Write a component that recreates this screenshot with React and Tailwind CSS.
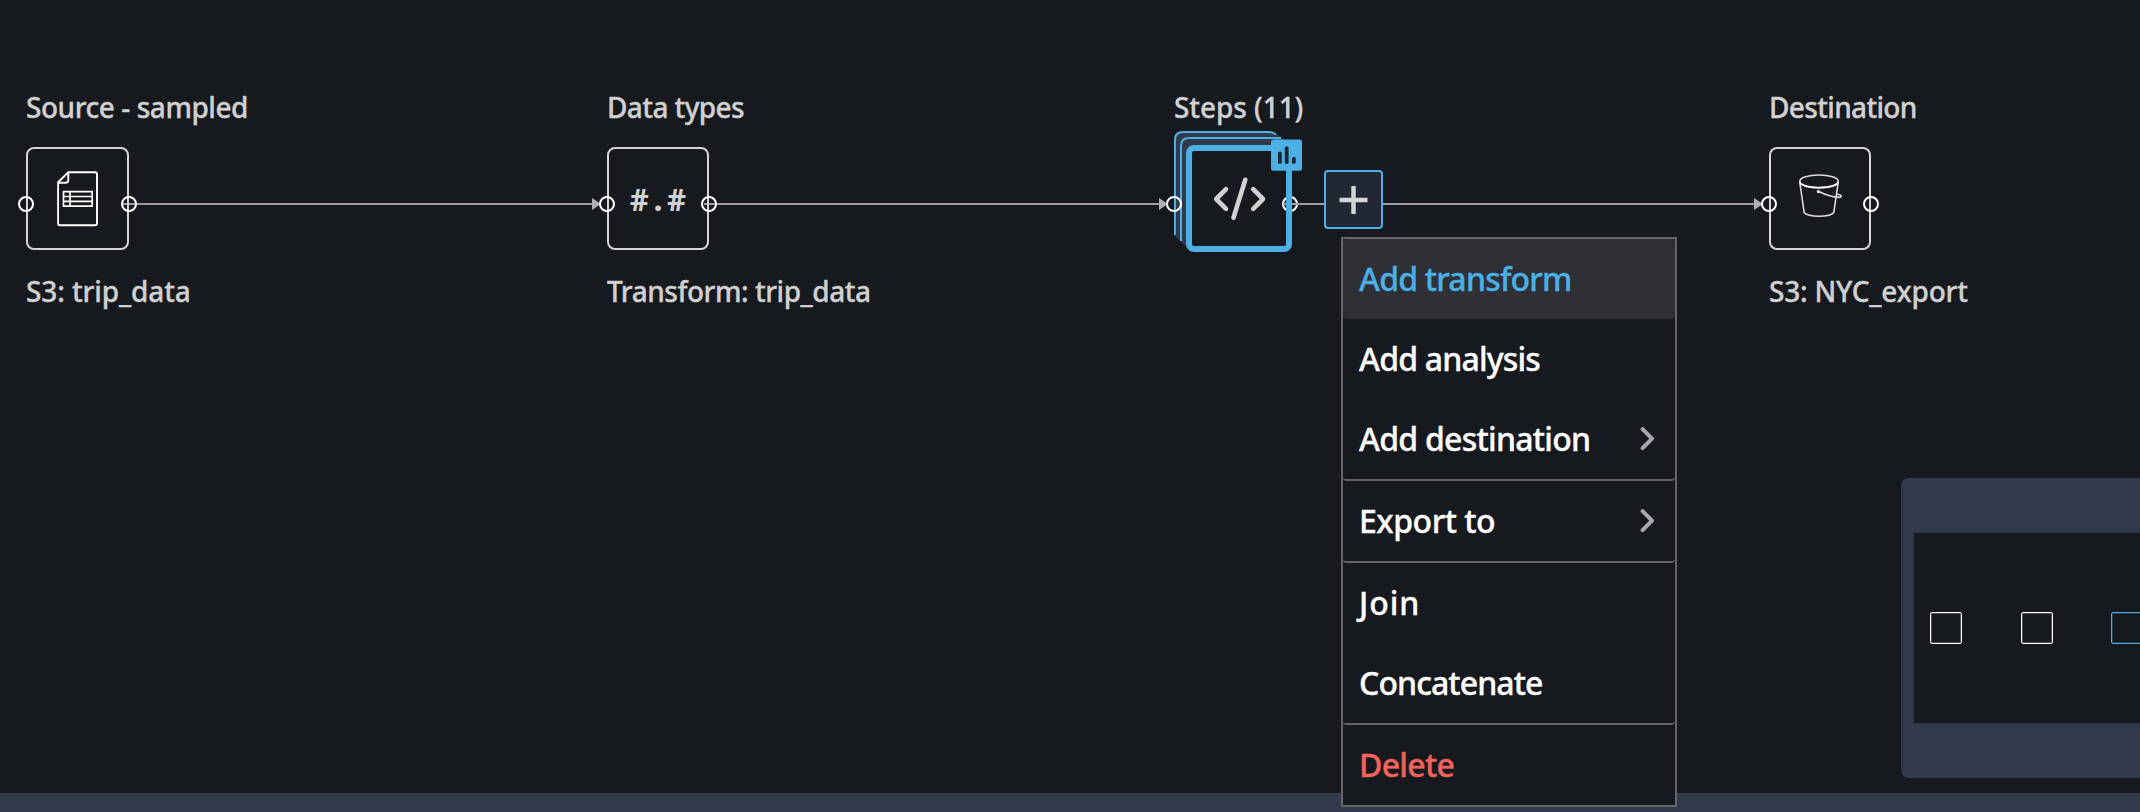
function Port({ className }) {
  return <span className={`absolute size-4 rounded-full border-2 border-white ${className}`} />;
}

function Node({ title, titleClass, label, labelClass, className, boxClass, children }) {
  return (
    <div className={`absolute top-[89px] flex flex-col whitespace-nowrap text-[28px] leading-9 font-medium text-[#d1d1d2] ${className}`}>
      <div className={titleClass}>{title}</div>
      <div className={`relative mt-[22px] flex h-[103px] items-center justify-center rounded-lg border-2 border-[#d5d5d6] ${boxClass}`}>
        {children}
        <Port className="top-[47px] -left-[10px]" />
        <Port className="top-[47px] -right-[10px]" />
      </div>
      <div className={`mt-[23px] ${labelClass}`}>{label}</div>
    </div>
  );
}

function Edges() {
  return (
    <svg className="absolute inset-0" width="2140" height="260" viewBox="0 0 2140 260" fill="none">
      <path d="M123 204H594M704 204H1160M1283 204H1756" stroke="#a19ca3" strokeWidth="2" />
      <path d="M592 198L601 204L592 210ZM1159 198L1168 204L1159 210ZM1754 198L1763 204L1754 210Z" fill="#b0adb3" />
    </svg>
  );
}

function SheetIcon() {
  return (
    <svg className="absolute left-[29px] top-[22px]" width="42" height="56" viewBox="57 171 42 56" fill="none" stroke="#fff" strokeWidth="1.9" strokeLinejoin="round">
      <path d="M68.3 172.2H95Q97 172.2 97 174.2V223.5Q97 225.2 95.3 225.2H59.8Q58.1 225.2 58.1 223.5V182.2Z" />
      <path d="M68.3 172.5V180Q68.3 182.7 65.6 182.7H58.4" />
      <path d="M63.5 191.7H92.2V206.2H63.5ZM63.5 196.5H92.2M63.5 201.4H92.2M70 191.7V206.2" strokeWidth="1.7" />
    </svg>
  );
}

function BucketIcon() {
  return (
    <svg className="absolute left-[27px] top-[24px]" width="46" height="46" viewBox="1798 173 46 46" fill="none" stroke="#dcdcdd" strokeWidth="1.6" strokeLinecap="round">
      <ellipse cx="1819" cy="181.3" rx="19.2" ry="6.3" />
      <path d="M1799.8 182C1801 190 1838 189.5 1838.2 182" stroke="#fff" />
      <path d="M1799.8 182.5L1804.2 212.5C1808 217.5 1830 217.5 1833.8 212.5L1838.2 182.5" />
      <circle cx="1818.5" cy="191.6" r="1.7" fill="#fff" stroke="none" />
      <path d="M1818.5 191.6C1826 195 1834 197.3 1838.5 197.4C1842.5 197.3 1842 194.8 1837 194.2" />
    </svg>
  );
}

function StepsNode() {
  return (
    <div className="absolute left-[1174px] top-[89px] flex w-[130px] flex-col whitespace-nowrap text-[28px] leading-9 font-medium text-[#d1d1d2]">
      <div className="tracking-[-0.07px]">Steps (11)</div>
      <svg className="absolute left-0 top-[42px]" width="120" height="120" viewBox="1174 131 120 120" fill="none">
        <path d="M1174 139Q1174 131 1182 131H1269Q1274 131 1282 138L1290 146V160H1200V250L1187 248L1180 241L1174 235Z" fill="#303a4a" />
        <path d="M1175 235V140Q1175 132 1183 132H1269Q1272 132 1276 134.5" stroke="#4cb0e4" strokeWidth="2" />
        <path d="M1181 241V146Q1181 138 1189 138H1281" stroke="#4cb0e4" strokeWidth="2" />
      </svg>
      <div className="relative mt-5 ml-3 h-[107px] w-[106px]">
        <div className="absolute inset-0 rounded-lg bg-[#16191e]" />
        <svg className="absolute left-[90px] top-[51px]" width="28" height="16" viewBox="0 0 28 16" fill="none">
          <circle cx="14" cy="8" r="7" stroke="#fff" strokeWidth="2" />
          <path d="M7 8H28" stroke="#a19ca3" strokeWidth="2" />
        </svg>
        <div className="absolute inset-0 rounded-lg border-6 border-[#4cb0e4]" />
        <Port className="top-[51px] -left-[20px]" />
        <svg className="absolute left-[26px] top-[30px]" width="56" height="48" viewBox="1212 175 56 48" fill="none" stroke="#d1d1d2" strokeWidth="4.6" strokeLinecap="round" strokeLinejoin="round">
          <path d="M1226 189.2L1216.2 199L1226 208.8M1253.2 189.2L1263 199L1253.2 208.8M1245.3 179.8L1233.5 217.8" />
        </svg>
        <svg className="absolute left-[85px] top-[-6px]" width="31" height="32" viewBox="0 0 31 32">
          <rect y="0.5" width="31" height="31.3" rx="2.5" fill="#4cb0e4" />
          <g fill="#1c2735">
            <rect x="7" y="12.5" width="3.8" height="12.5" rx="1.8" />
            <rect x="13.8" y="7.3" width="3.8" height="17.7" rx="1.8" />
            <rect x="21" y="18" width="3.8" height="7" rx="1.8" />
          </g>
        </svg>
      </div>
    </div>
  );
}

function AddButton() {
  return (
    <button className="absolute left-[1324px] top-[170px] flex size-[59px] items-center justify-center rounded-[4px] border-2 border-[#4cb0e4] bg-[#212733]">
      <svg width="29" height="29" viewBox="0 0 29 29" stroke="#d5d5d8" strokeWidth="4.5">
        <path d="M14.5 1V29M0.5 15H28.5" />
      </svg>
    </button>
  );
}

const MENU = [
  { text: "Add transform", className: "h-20 bg-[#2f3035] text-[#4cb0e4] tracking-[-0.79px]" },
  { text: "Add analysis", className: "h-20 text-white tracking-[-0.82px]" },
  { text: "Add destination", className: "h-[82px] border-b-2 text-white tracking-[-0.74px]", arrow: true },
  { text: "Export to", className: "h-[82px] border-b-2 text-white tracking-[-0.48px]", arrow: true },
  { text: "Join", className: "h-20 text-white tracking-[0.9px]" },
  { text: "Concatenate", className: "h-[82px] border-b-2 text-white tracking-[-0.92px]" },
  { text: "Delete", className: "h-20 text-[#f1635c] tracking-[-0.7px]" },
];

function Menu() {
  return (
    <div className="absolute left-[1341px] top-[237px] z-10 flex h-[570px] w-[336px] flex-col border-2 border-[#666565] bg-[#16191e] text-[32px] leading-10 font-medium">
      {MENU.map((item) => (
        <div key={item.text} className={`flex shrink-0 items-center justify-between rounded-[4px] border-[#666565] pr-5 pl-4 ${item.className}`}>
          <span>{item.text}</span>
          {item.arrow && (
            <svg width="15" height="24" viewBox="0 0 15 24" fill="none" stroke="#a9a9aa" strokeWidth="4" strokeLinecap="round" strokeLinejoin="round">
              <path d="M2.6 2.2L12 11.7L2.6 21.2" />
            </svg>
          )}
        </div>
      ))}
    </div>
  );
}

function MiniMap() {
  return (
    <div className="absolute left-[1901px] top-[478px] h-[300px] w-[260px] rounded-lg bg-[#303a4a] pt-[54px] pl-3">
      <div className="flex h-[192px] items-center gap-[58.5px] border border-[#29313e] bg-[#16191e] pl-4">
        <span className="size-8 shrink-0 rounded-[2px] border border-white shadow-[inset_0_0_0_1px_#ffffff40]" />
        <span className="size-8 shrink-0 rounded-[2px] border border-white shadow-[inset_0_0_0_1px_#ffffff40]" />
        <span className="size-8 shrink-0 rounded-[2px] border border-[#4cb0e4] shadow-[inset_0_0_0_1px_#4cb0e440]" />
      </div>
    </div>
  );
}

export default function App() {
  return (
    <div className="relative flex h-[812px] w-[2140px] flex-col overflow-hidden bg-[#16191e] font-['Noto_Sans','Open_Sans',sans-serif] [-webkit-text-stroke:0.35px]">
      <main className="relative flex-1">
        <Edges />
        <Node className="left-[26px]" boxClass="w-[103px]" title="Source - sampled" titleClass="tracking-[-0.45px]" label="S3: trip_data" labelClass="tracking-[-0.1px]">
          <SheetIcon />
        </Node>
        <Node className="left-[607px]" boxClass="w-[102px]" title="Data types" titleClass="tracking-[-0.6px]" label="Transform: trip_data" labelClass="tracking-[-0.47px]">
          <span className="font-['Noto_Sans_Mono','DejaVu_Sans_Mono',monospace] text-[31px] font-bold [-webkit-text-stroke:0]">#.#</span>
        </Node>
        <StepsNode />
        <Node className="left-[1769px]" boxClass="w-[102px]" title="Destination" titleClass="tracking-[-0.66px]" label="S3: NYC_export" labelClass="tracking-[-0.2px]">
          <BucketIcon />
        </Node>
        <AddButton />
        <Menu />
        <MiniMap />
      </main>
      <footer className="h-[19px] bg-[#303a4a]" />
    </div>
  );
}
